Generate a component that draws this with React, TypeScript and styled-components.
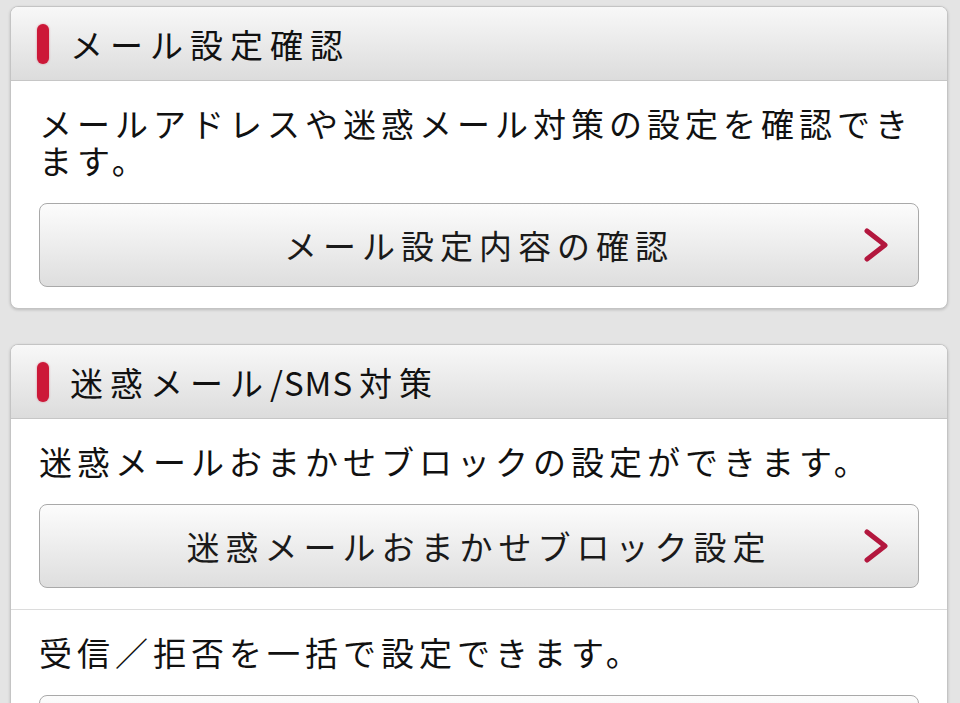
import { createGlobalStyle, styled } from "styled-components";

const GlobalStyle = createGlobalStyle`
  html, body {
    margin: 0;
    padding: 0;
    background: #e4e4e4;
  }
  body {
    font-family: "Noto Sans CJK JP", "Noto Sans", sans-serif;
    color: #111;
  }
`;

const Page = styled.div`
  display: flex;
  flex-direction: column;
  gap: 35px;
  padding: 6px 12px 0 10px;
  height: 703px;
  box-sizing: border-box;
  overflow: hidden;
`;

const Card = styled.section`
  flex-shrink: 0;
  background: #fff;
  border: 1px solid #c4c4c4;
  border-radius: 8px;
  box-shadow: 0 1px 3px rgba(0, 0, 0, 0.18);
  overflow: hidden;
`;

const CardHeader = styled.h2`
  margin: 0;
  height: 73px;
  display: flex;
  align-items: center;
  gap: 21px;
  padding-left: 26px;
  background: linear-gradient(#f8f8f8, #dcdcdc);
  border-bottom: 1px solid #c6c6c6;
  font-size: 33px;
  font-weight: normal;
  letter-spacing: 7px;
  color: #111;

  &::before {
    content: "";
    flex-shrink: 0;
    width: 12px;
    height: 40px;
    border-radius: 6px;
    background: #cc1838;
    box-shadow: 0 0 2px rgba(204, 24, 56, 0.5);
  }
`;

const Latin = styled.span`
  letter-spacing: 1px;
  margin-right: 6px;
`;

const Section = styled.div<{ $divider?: boolean }>`
  padding: 24px 28px 21px;
  border-top: ${({ $divider }) => ($divider ? "1px solid #dcdcdc" : "none")};
`;

const Description = styled.p`
  margin: 0 0 24px;
  font-size: 33px;
  line-height: 37px;
  letter-spacing: 5px;
  color: #111;
`;

const LinkButton = styled.button`
  position: relative;
  display: flex;
  align-items: center;
  justify-content: center;
  width: 100%;
  height: 84px;
  padding: 0;
  border: 1px solid #a9a9a9;
  border-radius: 8px;
  background: linear-gradient(#fcfcfc, #dedede);
  font-family: inherit;
  font-size: 33px;
  letter-spacing: 6px;
  color: #1a1a1a;
  cursor: pointer;

  svg {
    position: absolute;
    right: 29px;
    top: 50%;
    transform: translateY(-50%);
  }
`;

function Chevron() {
  return (
    <svg width="26" height="34" viewBox="0 0 26 34" fill="none">
      <path
        d="M4 3 L22 17 L4 31"
        stroke="#b3173e"
        strokeWidth="5"
        strokeLinecap="round"
        strokeLinejoin="round"
      />
    </svg>
  );
}

export default function App() {
  return (
    <>
      <GlobalStyle />
      <Page>
        <Card>
          <CardHeader>メール設定確認</CardHeader>
          <Section>
            <Description>
              メールアドレスや迷惑メール対策の設定を確認できます。
            </Description>
            <LinkButton>
              メール設定内容の確認
              <Chevron />
            </LinkButton>
          </Section>
        </Card>
        <Card>
          <CardHeader>
            <span>
              迷惑メール<Latin>/SMS</Latin>対策
            </span>
          </CardHeader>
          <Section>
            <Description>迷惑メールおまかせブロックの設定ができます。</Description>
            <LinkButton>
              迷惑メールおまかせブロック設定
              <Chevron />
            </LinkButton>
          </Section>
          <Section $divider>
            <Description>受信／拒否を一括で設定できます。</Description>
            <LinkButton>
              受信／拒否設定
              <Chevron />
            </LinkButton>
          </Section>
        </Card>
      </Page>
    </>
  );
}
